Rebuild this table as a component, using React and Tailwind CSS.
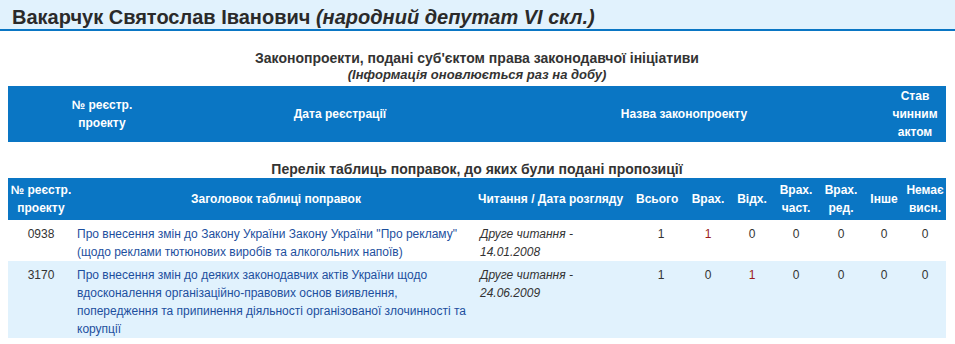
const bills = [];

const amendments = [
  {
    num: "0938",
    title:
      'Про внесення змін до Закону України Закону України "Про рекламу" (щодо реклами тютюнових виробів та алкогольних напоїв)',
    reading: "Друге читання - 14.01.2008",
    vals: [1, 1, 0, 0, 0, 0, 0],
    red: 1,
    bg: "bg-white",
  },
  {
    num: "3170",
    title:
      "Про внесення змін до деяких законодавчих актів України щодо вдосконалення організаційно-правових основ виявлення, попередження та припинення діяльності організованої злочинності та корупції",
    reading: "Друге читання - 24.06.2009",
    vals: [1, 0, 1, 0, 0, 0, 0],
    red: 2,
    bg: "bg-[#e1f2fd]",
  },
];

export default function App() {
  return (
    <div className="w-[955px] h-[344px] overflow-hidden bg-white font-['Liberation_Sans',Arial,sans-serif] text-[#333]">
      {/* заголовок сторінки */}
      <div className="h-[31px] bg-[#e1f2fd] border-b-2 border-[#0a76c4] px-3 pt-[5px]">
        <h1 className="text-[20px] leading-[24px] font-bold text-[#2a2a2a]">
          Вакарчук Святослав Іванович <i>(народний депутат VI скл.)</i>
        </h1>
      </div>

      <div className="pl-2 pr-[9px]">
        <h2 className="mt-[18px] text-center text-[14px] leading-[18px] font-bold">
          Законопроекти, подані суб'єктом права законодавчої ініціативи
        </h2>
        <p className="text-center text-[13px] leading-[16px] font-bold italic mb-[3px]">
          (Інформація оновлюється раз на добу)
        </p>

        <table className="w-[938px] border-collapse table-fixed text-[12px] leading-[18px]">
          <colgroup>
            <col className="w-[188px]" />
            <col className="w-[288px]" />
            <col className="w-[400px]" />
            <col className="w-[62px]" />
          </colgroup>
          <thead>
            <tr className="bg-[#0a76c4] text-white font-bold">
              <th className="py-px px-1 text-center">№ реєстр.<br />проекту</th>
              <th className="py-px px-1 text-center">Дата реєстрації</th>
              <th className="py-px px-1 text-center">Назва законопроекту</th>
              <th className="py-px px-0 text-center">Став<br />чинним<br />актом</th>
            </tr>
          </thead>
          <tbody>
            {bills.map((b) => (
              <tr key={b.num}>
                <td>{b.num}</td>
              </tr>
            ))}
          </tbody>
        </table>

        <h2 className="mt-[19px] text-center text-[14px] leading-[16px] font-bold">
          Перелік таблиць поправок, до яких були подані пропозиції
        </h2>

        <table className="mt-px w-[938px] border-collapse table-fixed text-[12px] leading-[18px]">
          <colgroup>
            <col className="w-[66px]" />
            <col className="w-[404px]" />
            <col className="w-[158px]" />
            <col className="w-[50px]" />
            <col className="w-[44px]" />
            <col className="w-[44px]" />
            <col className="w-[44px]" />
            <col className="w-[46px]" />
            <col className="w-[40px]" />
            <col className="w-[42px]" />
          </colgroup>
          <thead>
            <tr className="bg-[#0a76c4] text-white font-bold h-[42px]">
              <th className="py-[3px] px-0 text-center">№ реєстр.<br />проекту</th>
              <th className="py-[3px] px-1 text-center">Заголовок таблиці поправок</th>
              <th className="py-[3px] px-0 text-left whitespace-nowrap">Читання / Дата розгляду</th>
              <th className="py-[3px] px-0 text-left">Всього</th>
              <th className="py-[3px] px-0 text-center">Врах.</th>
              <th className="py-[3px] px-0 text-center">Відх.</th>
              <th className="py-[3px] px-0 text-center">Врах.<br />част.</th>
              <th className="py-[3px] px-0 text-center">Врах.<br />ред.</th>
              <th className="py-[3px] px-0 text-center">Інше</th>
              <th className="py-[3px] px-0 text-center">Немає<br />висн.</th>
            </tr>
          </thead>
          <tbody>
            {amendments.map((a) => (
              <tr key={a.num} className={a.bg}>
                <td className="pt-[5px] align-top text-center">{a.num}</td>
                <td className="pt-[5px] pl-[3px] pr-1 align-top text-[#1d4f9e]">{a.title}</td>
                <td className="pt-[5px] pl-[2px] pr-10 align-top italic">{a.reading}</td>
                {a.vals.map((v, i) => (
                  <td
                    key={i}
                    className={
                      i === a.red
                        ? "pt-[5px] align-top text-center text-[#9b1c1c]"
                        : "pt-[5px] align-top text-center"
                    }
                  >
                    {v}
                  </td>
                ))}
              </tr>
            ))}
          </tbody>
        </table>
      </div>
    </div>
  );
}
